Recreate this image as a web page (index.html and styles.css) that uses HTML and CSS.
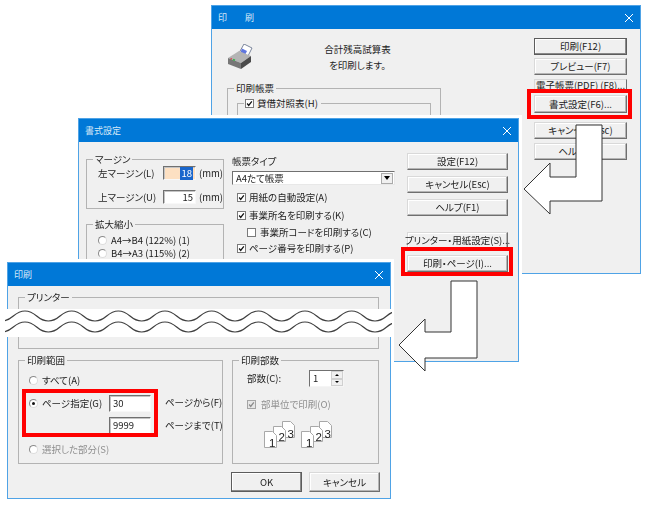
FILE: index.html
```html
<!DOCTYPE html>
<html lang="ja">
<head>
<meta charset="utf-8">
<title>印刷</title>
<link rel="stylesheet" href="styles.css">
</head>
<body>
<svg class="defs" width="0" height="0">
  <symbol id="tick" viewBox="0 0 9 9"><path d="M1.5 4.5 3.5 7 7.5 1.8" fill="none" stroke="currentColor" stroke-width="1.6"/></symbol>
  <symbol id="close" viewBox="0 0 8 8"><path d="M0 0 8 8M8 0 0 8" fill="none" stroke="#fff" stroke-width="1"/></symbol>
  <symbol id="sheet-art" viewBox="0 0 33 28">
    <g fill="#fff" stroke="#a8a8a8" stroke-width="1">
      <path d="M19.5 .5h8l4 4v12h-12z"/>
      <path d="M10.5 5.500h8l4 4v11h-12z"/>
      <path d="M1.500 10.500h8l4 4v12h-12z"/>
    </g>
  </symbol>
</svg>

<main class="stage">

  <section class="win win-a">
    <header class="title"><span>印　　刷</span><svg class="x"><use href="#close"/></svg></header>
    <div class="body body-a">
      <div class="col-a">
        <div class="head-a">
          <svg class="printer" viewBox="0 0 26 26">
            <path d="M12 9 17 0l8 4-5 10z" fill="#fff" stroke="#5d6a85" stroke-width=".8"/>
            <path d="M15 4.500l5 2.500-2.500 5-4.500-2.500z" fill="#5f76e0"/>
            <path d="M1 14 12 7l12 5-10 7z" fill="#b4b4b4"/>
            <path d="M1 14l13 5v6L1 20z" fill="#777"/>
            <path d="M14 19l10-7v6l-10 7z" fill="#4a4a4a"/>
            <path d="M6 15.500l2 .8" stroke="#37b14b" stroke-width="1.500"/>
            <path d="M3.500 14.500l1.500.6" stroke="#d05050" stroke-width="1.500"/>
          </svg>
          <p class="lead">合計残高試算表<br>を印刷します。</p>
        </div>
        <div class="group tall">
          <div class="legend">印刷帳票</div>
          <div class="group nested">
            <div class="legend check-legend"><span class="check"><svg><use href="#tick"/></svg></span>貸借対照表(H)</div>
          </div>
        </div>
      </div>
      <div class="btns-a">
        <div class="btn default">印刷(F12)</div>
        <div class="btn">プレビュー(F7)</div>
        <div class="btn clipped">電子帳票(PDF) (F8)...</div>
        <div class="btn lifted">書式設定(F6)...</div>
        <div class="btn after-lift">キャンセル(Esc)</div>
        <div class="btn last-a">ヘルプ(F1)</div>
      </div>
    </div>
  </section>

  <section class="win win-b">
    <header class="title"><span>書式設定</span><svg class="x"><use href="#close"/></svg></header>
    <div class="body body-b">
      <div class="col-b-left">
        <div class="group margins">
          <div class="legend">マージン</div>
          <div class="m-row"><span class="m-label">左マージン(L)</span><span class="field focus"><mark class="sel">18</mark></span><span class="unit">(mm)</span></div>
          <div class="m-row"><span class="m-label">上マージン(U)</span><span class="field">15</span><span class="unit">(mm)</span></div>
        </div>
        <div class="group scale">
          <div class="legend">拡大縮小</div>
          <div class="line"><span class="radio"></span>A4→B4 (122%) (1)</div>
          <div class="line"><span class="radio"></span>B4→A3 (115%) (2)</div>
        </div>
      </div>
      <div class="col-b-mid">
        <div class="line">帳票タイプ</div>
        <div class="select"><span class="select-text">A4たて帳票</span><span class="drop"></span></div>
        <div class="line c1"><span class="check"><svg><use href="#tick"/></svg></span>用紙の自動設定(A)</div>
        <div class="line c2"><span class="check"><svg><use href="#tick"/></svg></span>事業所名を印刷する(K)</div>
        <div class="line c3"><span class="check"></span>事業所コードを印刷する(C)</div>
        <div class="line c4"><span class="check"><svg><use href="#tick"/></svg></span>ページ番号を印刷する(P)</div>
      </div>
      <div class="col-b-right">
        <div class="btn">設定(F12)</div>
        <div class="btn">キャンセル(Esc)</div>
        <div class="btn">ヘルプ(F1)</div>
        <div class="btn spaced">プリンター・用紙設定(S)...</div>
        <div class="btn">印刷・ページ(I)...</div>
      </div>
    </div>
  </section>

  <section class="win win-c">
    <header class="title"><span>印刷</span><svg class="x"><use href="#close"/></svg></header>
    <div class="body body-c">
      <div class="group printer-group"><div class="legend">プリンター</div></div>
      <div class="c-groups">
        <div class="group range">
          <div class="legend">印刷範囲</div>
          <div class="range-grid">
            <div class="line span-all"><span class="radio"></span>すべて(A)</div>
            <div class="line r2"><span class="radio on"></span>ページ指定(G)</div>
            <span class="field left wide first">30</span>
            <span class="line">ページから(F)</span>
            <span class="r-empty"></span>
            <span class="field left wide">9999</span>
            <span class="line">ページまで(T)</span>
            <div class="line span-all off r4"><span class="radio"></span>選択した部分(S)</div>
          </div>
        </div>
        <div class="group copies">
          <div class="legend">印刷部数</div>
          <div class="copies-row"><span class="copies-label">部数(C):</span>
            <span class="spin"><span class="spin-val">1</span><span class="spin-btns"><i class="up"></i><i class="down"></i></span></span>
          </div>
          <div class="line off collate"><span class="check gray"><svg><use href="#tick"/></svg></span>部単位で印刷(O)</div>
          <div class="sheets">
            <svg viewBox="0 0 33 28"><use href="#sheet-art"/><text class="digit" x="24.500" y="16.500">3</text><text class="digit" x="15.500" y="20">2</text><text class="digit" x="6" y="26">1</text></svg>
            <svg viewBox="0 0 33 28"><use href="#sheet-art"/><text class="digit" x="24.500" y="16.500">3</text><text class="digit" x="15.500" y="20">2</text><text class="digit" x="6" y="26">1</text></svg>
          </div>
        </div>
      </div>
      <div class="c-actions">
        <div class="btn default big">OK</div>
        <div class="btn big">キャンセル</div>
      </div>
    </div>
  </section>

  <svg class="overlay" width="647" height="507" viewBox="0 0 647 507">
    <rect x="5" y="309" width="388" height="28" fill="#fff"/>
    <svg x="5" y="305" width="387" height="36" viewBox="5 305 387 36">
      <path class="wave" d="M-10 316q11.670 10 23.330 0t23.340 0t23.330 0t23.330 0t23.340 0t23.330 0t23.330 0t23.340 0t23.330 0t23.330 0t23.340 0t23.330 0t23.330 0t23.340 0t23.330 0t23.330 0t23.340 0t23.330 0t23.330 0"/>
      <path class="wave" d="M-10 327q11.670 10 23.330 0t23.340 0t23.330 0t23.330 0t23.340 0t23.330 0t23.330 0t23.340 0t23.330 0t23.330 0t23.340 0t23.330 0t23.330 0t23.340 0t23.330 0t23.330 0t23.340 0t23.330 0t23.330 0"/>
    </svg>
    <rect class="hl" x="529" y="91" width="101" height="26"/>
    <rect class="hl" x="403" y="249" width="108" height="25"/>
    <rect class="hl" x="24" y="391" width="132" height="44"/>
    <polygon class="arrow" points="524,189 550,163 550,177 576,177 576,125 602,125 602,201 550,201 550,214"/>
    <polygon class="arrow" points="399,345 425,319 425,332 451,332 451,281 477,281 477,358 425,358 425,371"/>
  </svg>
</main>
</body>
</html>
```

FILE: styles.css
```css
* { box-sizing: border-box; }
html, body { margin: 0; background: #fff; }
.defs { position: absolute; }
.stage {
  position: relative;
  width: 647px;
  height: 507px;
  overflow: hidden;
  font: 9.5px/13px "Noto Sans CJK JP", "Liberation Sans", sans-serif;
  font-feature-settings: "palt";
  color: #222;
  filter: blur(.3px);
}
.win {
  position: absolute;
  display: flex;
  flex-direction: column;
  overflow: hidden;
  background: #f0f0f0;
  border: 1px solid #4fa3e6;
  box-shadow: 0 0 0 3px #fff;
}
.win-a { left: 211px; top: 5px; width: 430px; height: 269px; box-shadow: none; }
.win-b { left: 78px; top: 118px; width: 441px; height: 244px; }
.win-c { left: 7px; top: 262px; width: 384px; height: 237px; }
.title {
  flex: none;
  display: flex;
  align-items: center;
  justify-content: space-between;
  height: 23px;
  padding: 0 7px 0 6px;
  background: #0078d7;
  color: #d5e8f8;
  font-size: 9px;
  font-feature-settings: normal;
}
.x { width: 8px; height: 8px; }
.body { flex: 1; min-height: 0; }

.btn {
  display: flex;
  align-items: center;
  justify-content: center;
  height: 17px;
  white-space: nowrap;
  background: #f0f0f0;
  border: 1px solid;
  border-color: #d9d9d9 #6f6f6f #6f6f6f #d9d9d9;
  box-shadow: inset -1px -1px 0 #b5b5b5, inset 1px 1px 0 #fff;
}
.btn.default { border-color: #5c5c5c; box-shadow: inset -1px -1px 0 #8a8a8a, inset 1px 1px 0 #fff; }

.group { border: 1px solid #b3b3b3; }
.legend {
  display: table;
  margin: -7px 0 0 6px;
  padding: 0 2px;
  background: #f0f0f0;
  line-height: 13px;
  white-space: nowrap;
}
.line { display: flex; align-items: center; height: 13px; line-height: 13px; white-space: nowrap; }
.off { color: #8f8f8f; }

.check {
  flex: none;
  display: inline-flex;
  width: 9px;
  height: 9px;
  margin-right: 3px;
  background: #fff;
  border: 1px solid #7a7a7a;
  color: #111;
}
.check svg { width: 100%; height: 100%; }
.check.gray { background: #e6e6e6; border-color: #a5a5a5; color: #8a8a8a; margin-right: 5px; }
.radio {
  flex: none;
  display: inline-flex;
  align-items: center;
  justify-content: center;
  width: 9px;
  height: 9px;
  margin-right: 4px;
  background: #fff;
  border: 1px solid #8a8a8a;
  border-right-color: #ddd;
  border-bottom-color: #ddd;
  border-radius: 50%;
}
.radio.on::after { content: ""; width: 3px; height: 3px; border-radius: 50%; background: #111; }

.field {
  display: flex;
  align-items: center;
  justify-content: flex-end;
  width: 33px;
  height: 14px;
  padding: 0 2px;
  background: #fff;
  border: 1px solid;
  border-color: #707070 #f8f8f8 #f8f8f8 #707070;
  box-shadow: inset 1px 1px 0 #c4c4c4;
}
.field.focus { background: #fde0c2; }
.field.left { justify-content: flex-start; padding-left: 3px; }
.field.wide { width: 42px; height: 17px; }
.sel { background: #1a66cc; color: #fff; padding: 0 1px; }

/* window A */
.body-a { display: flex; gap: 93px; padding: 9px 13px 0 15px; }
.col-a { flex: none; width: 214px; }
.head-a { display: flex; height: 50px; }
.printer { flex: none; width: 26px; height: 26px; margin-top: 6px; }
.lead { flex: 1; margin: 3px 0 0; padding-left: 21px; text-align: center; line-height: 16px; }
.tall { height: 120px; }
.nested { margin: 8px 9px 0; height: 60px; }
.check-legend { display: flex; align-items: center; width: max-content; padding: 0 3px 0 1px; }
.btns-a { flex: none; width: 93px; display: flex; flex-direction: column; gap: 3px; }
.clipped { height: 13px; margin-top: 1px; padding-bottom: 1px; border-bottom: 0; box-shadow: none; }
.lifted { height: 18px; }
.after-lift { margin-top: 6px; }
.last-a { margin-top: 1px; }

/* window B */
.body-b { display: flex; align-items: flex-start; padding-left: 7px; }
.col-b-left { flex: none; width: 138px; padding-top: 17px; }
.margins { height: 50px; }
.m-row { display: flex; align-items: center; height: 14px; padding-left: 11px; margin-bottom: 10px; }
.m-label { width: 65px; white-space: nowrap; }
.unit { margin-left: 2px; padding-left: 1px; }
.scale { margin-top: 15px; height: 60px; padding-left: 11px; }
.scale .legend { margin-left: -5px; margin-bottom: 3px; }
.col-b-mid { flex: none; width: 163px; margin-left: 8px; padding-top: 13px; }
.select {
  display: flex;
  align-items: center;
  justify-content: space-between;
  height: 14px;
  margin: 3px 0 6px;
  padding: 0 1px 0 3px;
  background: #fff;
  border: 1px solid;
  border-color: #707070 #e8e8e8 #e8e8e8 #707070;
}
.drop {
  display: flex;
  align-items: center;
  justify-content: center;
  width: 12px;
  height: 11px;
  background: #f0f0f0;
  border: 1px solid #aaa;
}
.drop::after { content: ""; border: 3px solid transparent; border-top: 4px solid #000; border-bottom: 0; }
.c1, .c2, .c4 { margin-left: 5px; }
.c3 { margin-left: 15px; }
.c3 .check { margin-right: 4px; }
.c2 { margin-top: 5px; }
.c3 { margin-top: 4px; }
.c4 { margin-top: 3px; }
.col-b-right { flex: none; width: 101px; margin-left: 12px; padding-top: 11px; display: flex; flex-direction: column; gap: 6px; }
.spaced { margin-top: 10px; }

/* window C */
.body-c { padding: 11px 10px 0 10px; }
.printer-group { width: 361px; height: 52px; }
.c-groups { display: flex; gap: 9px; width: 361px; margin-top: 11px; }
.range { flex: none; width: 205px; height: 104px; }
.copies { flex: none; width: 147px; height: 104px; }
.range-grid {
  display: grid;
  grid-template-columns: 66px 42px auto;
  column-gap: 14px;
  row-gap: 5px;
  align-items: center;
  padding: 7px 0 0 10px;
}
.span-all { grid-column: 1 / -1; }
.r2 { margin-top: 3px; }
.field.first { margin-top: 3px; }
.r4 { margin-top: 4px; }
.r-empty { height: 1px; }
.copies-row { display: flex; align-items: center; height: 17px; margin: 3px 0 0 14px; }
.copies-label { width: 62px; }
.spin {
  display: flex;
  justify-content: space-between;
  align-items: center;
  width: 35px;
  height: 17px;
  background: #fff;
  border: 1px solid;
  border-color: #707070 #f5f5f5 #f5f5f5 #707070;
  padding-left: 3px;
}
.spin-btns { display: flex; flex-direction: column; width: 12px; height: 15px; }
.spin-btns i {
  flex: 1;
  display: flex;
  align-items: center;
  justify-content: center;
  background: #f0f0f0;
  border: 1px solid #d0d0d0;
}
.up::after { content: ""; border: 2px solid transparent; border-bottom: 2px solid #000; border-top: 0; }
.down::after { content: ""; border: 2px solid transparent; border-top: 2px solid #000; border-bottom: 0; }
.collate { margin: 11px 0 0 14px; }
.sheets { display: flex; gap: 4px; margin: 10px 0 0 30px; }
.sheets svg { flex: none; width: 33px; height: 28px; }
.digit { font: 11.500px "Liberation Sans", sans-serif; fill: #222; }
.c-actions { display: flex; justify-content: flex-end; gap: 7px; margin-top: 8px; }
.big { width: 71px; height: 20px; }

/* overlay */
.overlay { position: absolute; left: 0; top: 0; }
.wave { fill: none; stroke: #3f3f3f; stroke-width: 1.2; }
.hl { fill: none; stroke: #f00; stroke-width: 4; }
.arrow { fill: #fff; stroke: #333; stroke-width: 1; }
```
